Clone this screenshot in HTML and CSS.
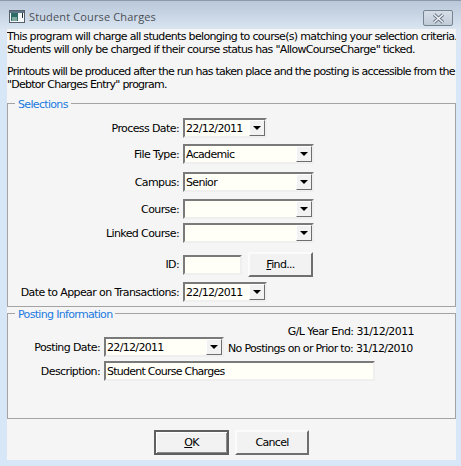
FILE: index.html
```html
<!DOCTYPE html>
<html lang="en">
<head>
  <meta charset="UTF-8">
  <title>Student Course Charges</title>
  <link rel="stylesheet" href="styles.css">
</head>
<body>
  <div class="window">
    <div class="titlebar">
      <svg class="app-icon" width="16" height="16" viewBox="0 0 16 16">
        <rect x="0.5" y="1.5" width="15" height="12" fill="#f4f6f8" stroke="#56606a"/>
        <rect x="1" y="2" width="14" height="2" fill="#5f7488"/>
        <rect x="2" y="4" width="7" height="8" fill="#2f6b66"/>
        <rect x="3" y="8" width="5" height="4" fill="#7fa8a0"/>
        <rect x="13" y="4" width="1" height="5" fill="#20303c"/>
      </svg>
      <div class="title">Student Course Charges</div>
      <div class="close-btn">
        <svg width="15" height="11" viewBox="0 0 15 11">
          <path d="M3 1.5 L12 9.5 M12 1.5 L3 9.5" stroke="#6b7785" stroke-width="3.4" fill="none"/>
          <path d="M3 1.5 L12 9.5 M12 1.5 L3 9.5" stroke="#f4f6f8" stroke-width="1.4" fill="none"/>
        </svg>
      </div>
    </div>

    <div class="content">
      <div class="intro">
        <p>This program will charge all students belonging to course(s) matching your selection criteria.<br>Students will only be charged if their course status has "AllowCourseCharge" ticked.</p>
        <p class="intro-tight">Printouts will be produced after the run has taken place and the posting is accessible from the<br>"Debtor Charges Entry" program.</p>
      </div>

      <fieldset class="group selections">
        <legend>Selections</legend>
        <div class="row row-process">
          <label>Process Date:</label>
          <div class="field date-field"><span>22/12/2011</span><span class="drop"><i></i></span></div>
        </div>
        <div class="row row-file">
          <label>File Type:</label>
          <div class="field combo"><span>Academic</span><span class="drop"><i></i></span></div>
        </div>
        <div class="row row-campus">
          <label>Campus:</label>
          <div class="field combo"><span>Senior</span><span class="drop"><i></i></span></div>
        </div>
        <div class="row row-course">
          <label>Course:</label>
          <div class="field combo"><span></span><span class="drop"><i></i></span></div>
        </div>
        <div class="row row-linked">
          <label>Linked Course:</label>
          <div class="field combo"><span></span><span class="drop"><i></i></span></div>
        </div>
        <div class="row row-id">
          <label>ID:</label>
          <div class="field id-field"></div>
          <button class="btn find-btn"><u>F</u>ind...</button>
        </div>
        <div class="row row-appear">
          <label>Date to Appear on Transactions:</label>
          <div class="field date-field"><span>22/12/2011</span><span class="drop"><i></i></span></div>
        </div>
      </fieldset>

      <fieldset class="group posting">
        <legend>Posting Information</legend>
        <div class="year-end">G/L Year End: 31/12/2011</div>
        <div class="row row-posting">
          <label>Posting Date:</label>
          <div class="field posting-date"><span>22/12/2011</span><span class="drop"><i></i></span></div>
          <div class="no-postings">No Postings on or Prior to: 31/12/2010</div>
        </div>
        <div class="row row-desc">
          <label>Description:</label>
          <div class="field desc-field"><span>Student Course Charges</span></div>
        </div>
      </fieldset>

      <div class="actions">
        <button class="btn ok-btn"><u>O</u>K</button>
        <button class="btn cancel-btn">Cancel</button>
      </div>
    </div>
  </div>
</body>
</html>
```

FILE: styles.css
```css
html, body {
  margin: 0;
  height: 100%;
}
body {
  font-family: "DejaVu Sans", sans-serif;
  font-size: 11px;
  letter-spacing: -0.67px;
  color: #000;
  overflow: hidden;
}
.window {
  height: 466px;
  padding: 0 5px 6px 7px;
  box-sizing: border-box;
  background: linear-gradient(to bottom, #b9c8da 0, #c6d3e3 12px, #dbe6f2 29px, #d7e7f7 60px);
  border-top: 1px solid #8c9aa8;
}
.titlebar {
  display: flex;
  align-items: center;
  height: 28px;
}
.app-icon {
  margin: 4px 0 0 2px;
}
.title {
  margin: 3px 0 0 4px;
  font-family: "Open Sans", sans-serif;
  font-size: 11px;
  letter-spacing: 0.14px;
  color: #4a4f55;
  flex: 1;
}
.close-btn {
  display: flex;
  align-items: center;
  justify-content: center;
  box-sizing: border-box;
  width: 30px;
  height: 16px;
  margin: 6px 3px 0 0;
  border: 1px solid #77838f;
  border-radius: 2px;
  background: linear-gradient(to bottom, #d6dee8, #c0cbd8);
}
.content {
  height: 431px;
  background-color: #f5f5f5;
  overflow: hidden;
}
.intro {
  box-sizing: border-box;
  height: 66px;
  padding-top: 1px;
  line-height: 13px;
}
.intro p {
  margin: 0 0 9px 0;
  white-space: nowrap;
}
.intro .intro-tight {
  letter-spacing: -0.76px;
}
.group {
  margin: 0;
  padding: 0;
  border: 1px solid #a3a3a3;
  box-sizing: border-box;
}
.group legend {
  margin-left: 7px;
  padding: 3px 3px 0 3px;
  color: #1a7ae0;
  line-height: 13px;
  font-size: 11px;
}
.selections {
  height: 212px;
}
.posting {
  height: 114px;
  margin-top: -2px;
}
.row {
  display: flex;
  align-items: center;
}
.row label {
  width: 171px;
  margin-right: 4px;
  text-align: right;
  white-space: nowrap;
  letter-spacing: -0.6px;
}
.posting .row label {
  width: 92px;
}
.field {
  display: flex;
  align-items: center;
  justify-content: space-between;
  box-sizing: border-box;
  height: 20px;
  padding-left: 1px;
  background: #fffff8;
  border: 2px solid;
  border-color: #7a7a7a #efefef #efefef #7a7a7a;
}
.drop {
  display: flex;
  align-items: center;
  justify-content: center;
  width: 16px;
  height: 16px;
  box-sizing: border-box;
  background: #f2f2f2;
  border: 1px solid;
  border-color: #fff #6e6e6e #6e6e6e #fff;
}
.drop i {
  width: 0;
  height: 0;
  border-left: 4px solid transparent;
  border-right: 4px solid transparent;
  border-top: 4px solid #000;
}
.date-field { width: 84px; }
.combo { width: 131px; }
.id-field { width: 59px; }
.posting-date { width: 120px; }
.desc-field { width: 271px; }
.desc-field span { letter-spacing: -0.75px; }
.row-process { margin-top: 7px; }
.row-file { margin-top: 6px; }
.row-campus { margin-top: 8px; }
.row-course { margin-top: 7px; }
.row-linked { margin-top: 4px; }
.row-id { margin-top: 9px; }
.row-appear { margin-top: 5px; }
.btn {
  font-family: inherit;
  font-size: 11px;
  letter-spacing: inherit;
  color: #000;
  box-sizing: border-box;
  padding: 0;
  background: #f2f2f2;
  border: 2px solid;
  border-color: #fbfbfb #6f6f6f #6f6f6f #fbfbfb;
}
.find-btn {
  width: 65px;
  height: 25px;
  margin: 0 0 0 6px;
}
.year-end {
  text-align: right;
  margin: 4px 41px 0 0;
  line-height: 13px;
  letter-spacing: -0.58px;
}
.no-postings {
  margin: 3px 0 0 4px;
  white-space: nowrap;
}
.row-posting { margin-top: -1px; }
.row-desc { margin-top: 4px; }
.actions {
  display: flex;
  justify-content: center;
  gap: 6px;
  margin: 11px 0 0 0;
}
.ok-btn {
  width: 75px;
  height: 25px;
  border-color: #5f5f5f;
  box-shadow: inset 1px 1px 0 #fff, inset -1px -1px 0 #8a8a8a;
}
.cancel-btn {
  width: 74px;
  height: 25px;
}
```
